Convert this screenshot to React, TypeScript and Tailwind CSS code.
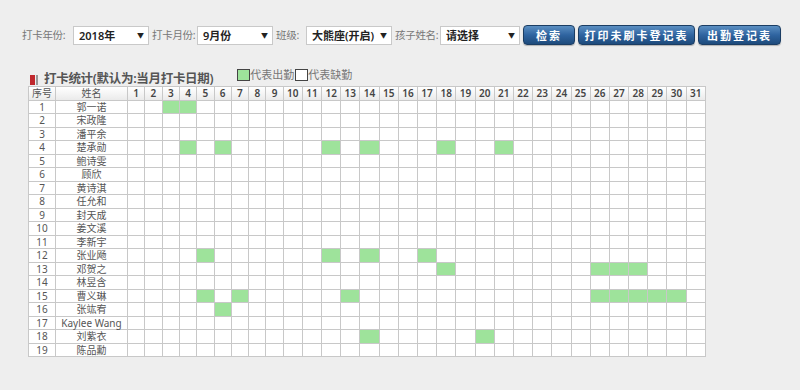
import React from 'react';

const names = [
  '郭一诺', '宋政隆', '潘平余', '楚承勋', '鲍诗雯', '顾欣', '黄诗淇', '任允和', '封天成', '姜文溪',
  '李新宇', '张业飏', '邓贺之', '林昱含', '曹义琳', '张竑宥', 'Kaylee Wang', '刘紫衣', '陈品勳',
];

// 出勤记录: 行号 -> 出勤日期
const present: Record<number, number[]> = {
  1: [3, 4],
  4: [4, 6, 12, 14, 18, 21],
  12: [5, 12, 14, 17],
  13: [18, 26, 27, 28],
  15: [5, 7, 13, 26, 27, 28, 29, 30],
  16: [6],
  18: [14, 20],
};

const days = Array.from({ length: 31 }, (_, i) => i + 1);

const font = { fontFamily: '"Noto Sans", "Noto Sans CJK SC", sans-serif' };

const Select = ({ label, value, labelW, width }: { label: string; value: string; labelW: string; width: string }) => (
  <div className="flex items-center mr-[3px]">
    <span className={`${labelW} shrink-0 text-[10.5px] text-[#777] leading-none whitespace-nowrap tracking-[-0.3px]`}>{label}</span>
    <div className={`${width} shrink-0 h-[19px] bg-white border border-[#c9c9c9] flex items-center justify-between pl-[5px] pr-[4px]`}>
      <span className="text-[11px] font-semibold text-[#222] leading-none whitespace-nowrap">{value}</span>
      <span className="text-[7px] text-[#222] leading-none">▼</span>
    </div>
  </div>
);

const Button = ({ children, width }: { children: React.ReactNode; width: string }) => (
  <button
    className={`${width} h-[20px] rounded-[4px] border border-[#1b3d63] bg-gradient-to-b from-[#5b8fc2] via-[#2f64a0] to-[#1e4b7c] text-white text-[11px] font-semibold tracking-[2px] leading-none shadow-[0_1px_1px_rgba(0,0,0,0.25)]`}
  >
    {children}
  </button>
);

export default function App() {
  return (
    <div className="w-[800px] h-[390px] bg-[#eeeeee] overflow-hidden" style={font}>
      {/* 查询条件 */}
      <div className="flex items-center pl-[22px] pt-[25px] h-[45px]">
        <Select label="打卡年份:" value="2018年" labelW="w-[51px]" width="w-[76px]" />
        <Select label="打卡月份:" value="9月份" labelW="w-[45px]" width="w-[76px]" />
        <Select label="班级:" value="大熊座(开启)" labelW="w-[30px]" width="w-[86px]" />
        <Select label="孩子姓名:" value="请选择" labelW="w-[45px]" width="w-[80px]" />
        <div className="flex gap-[3px]">
          <Button width="w-[52px]">检索</Button>
          <Button width="w-[117px]">打印未刷卡登记表</Button>
          <Button width="w-[83px]">出勤登记表</Button>
        </div>
      </div>

      {/* 标题与图例 */}
      <div className="flex items-end pl-[30px] mt-[26px] h-[17px]">
        <div className="flex items-center h-[17px]">
          <span className="w-[5px] h-[10px] bg-[#c0282d]" />
          <span className="w-[2px] h-[10px] bg-[#999] ml-[1px]" />
          <span className="ml-[6px] text-[12.5px] font-semibold text-[#555] leading-none tracking-[-0.3px]">
            打卡统计(默认为:当月打卡日期)
          </span>
        </div>
        <div className="flex items-center ml-[24px] h-[17px] -translate-y-[5px]">
          <span className="w-[13px] h-[12px] bg-[#9ee39b] border border-[#444]" />
          <span className="text-[11px] text-[#777] leading-none">代表出勤</span>
          <span className="w-[13px] h-[12px] bg-white border border-[#444] ml-[1px]" />
          <span className="text-[11px] text-[#777] leading-none">代表缺勤</span>
        </div>
      </div>

      {/* 出勤表 */}
      <div className="pl-[28px] mt-[-2px]">
        <table className="table-fixed border-collapse w-[678px] bg-white text-[10px] text-[#555]">
          <colgroup>
            <col className="w-[27px]" />
            <col className="w-[72px]" />
            {days.map((d) => (
              <col key={d} className={d < 10 ? 'w-[17.3px]' : 'w-[19.2px]'} />
            ))}
          </colgroup>
          <thead>
            <tr className="h-[13.5px] bg-gradient-to-b from-white to-[#e9e9e9]">
              <th className="border border-[#c8c8c8] font-normal p-0 leading-none">序号</th>
              <th className="border border-[#c8c8c8] font-normal p-0 leading-none">姓名</th>
              {days.map((d) => (
                <th key={d} className="border border-[#c8c8c8] font-semibold text-[#444] p-0 leading-none">
                  {d}
                </th>
              ))}
            </tr>
          </thead>
          <tbody>
            {names.map((name, i) => {
              const row = i + 1;
              const on = present[row] || [];
              return (
                <tr key={row} className="h-[13.5px]">
                  <td className="border border-[#c8c8c8] text-center p-0 leading-none">{row}</td>
                  <td className="border border-[#c8c8c8] text-center p-0 leading-none whitespace-nowrap">{name}</td>
                  {days.map((d) => (
                    <td
                      key={d}
                      className={`border border-[#c8c8c8] p-0 ${on.includes(d) ? 'bg-[#9ee39b]' : ''}`}
                    />
                  ))}
                </tr>
              );
            })}
          </tbody>
        </table>
      </div>
    </div>
  );
}
